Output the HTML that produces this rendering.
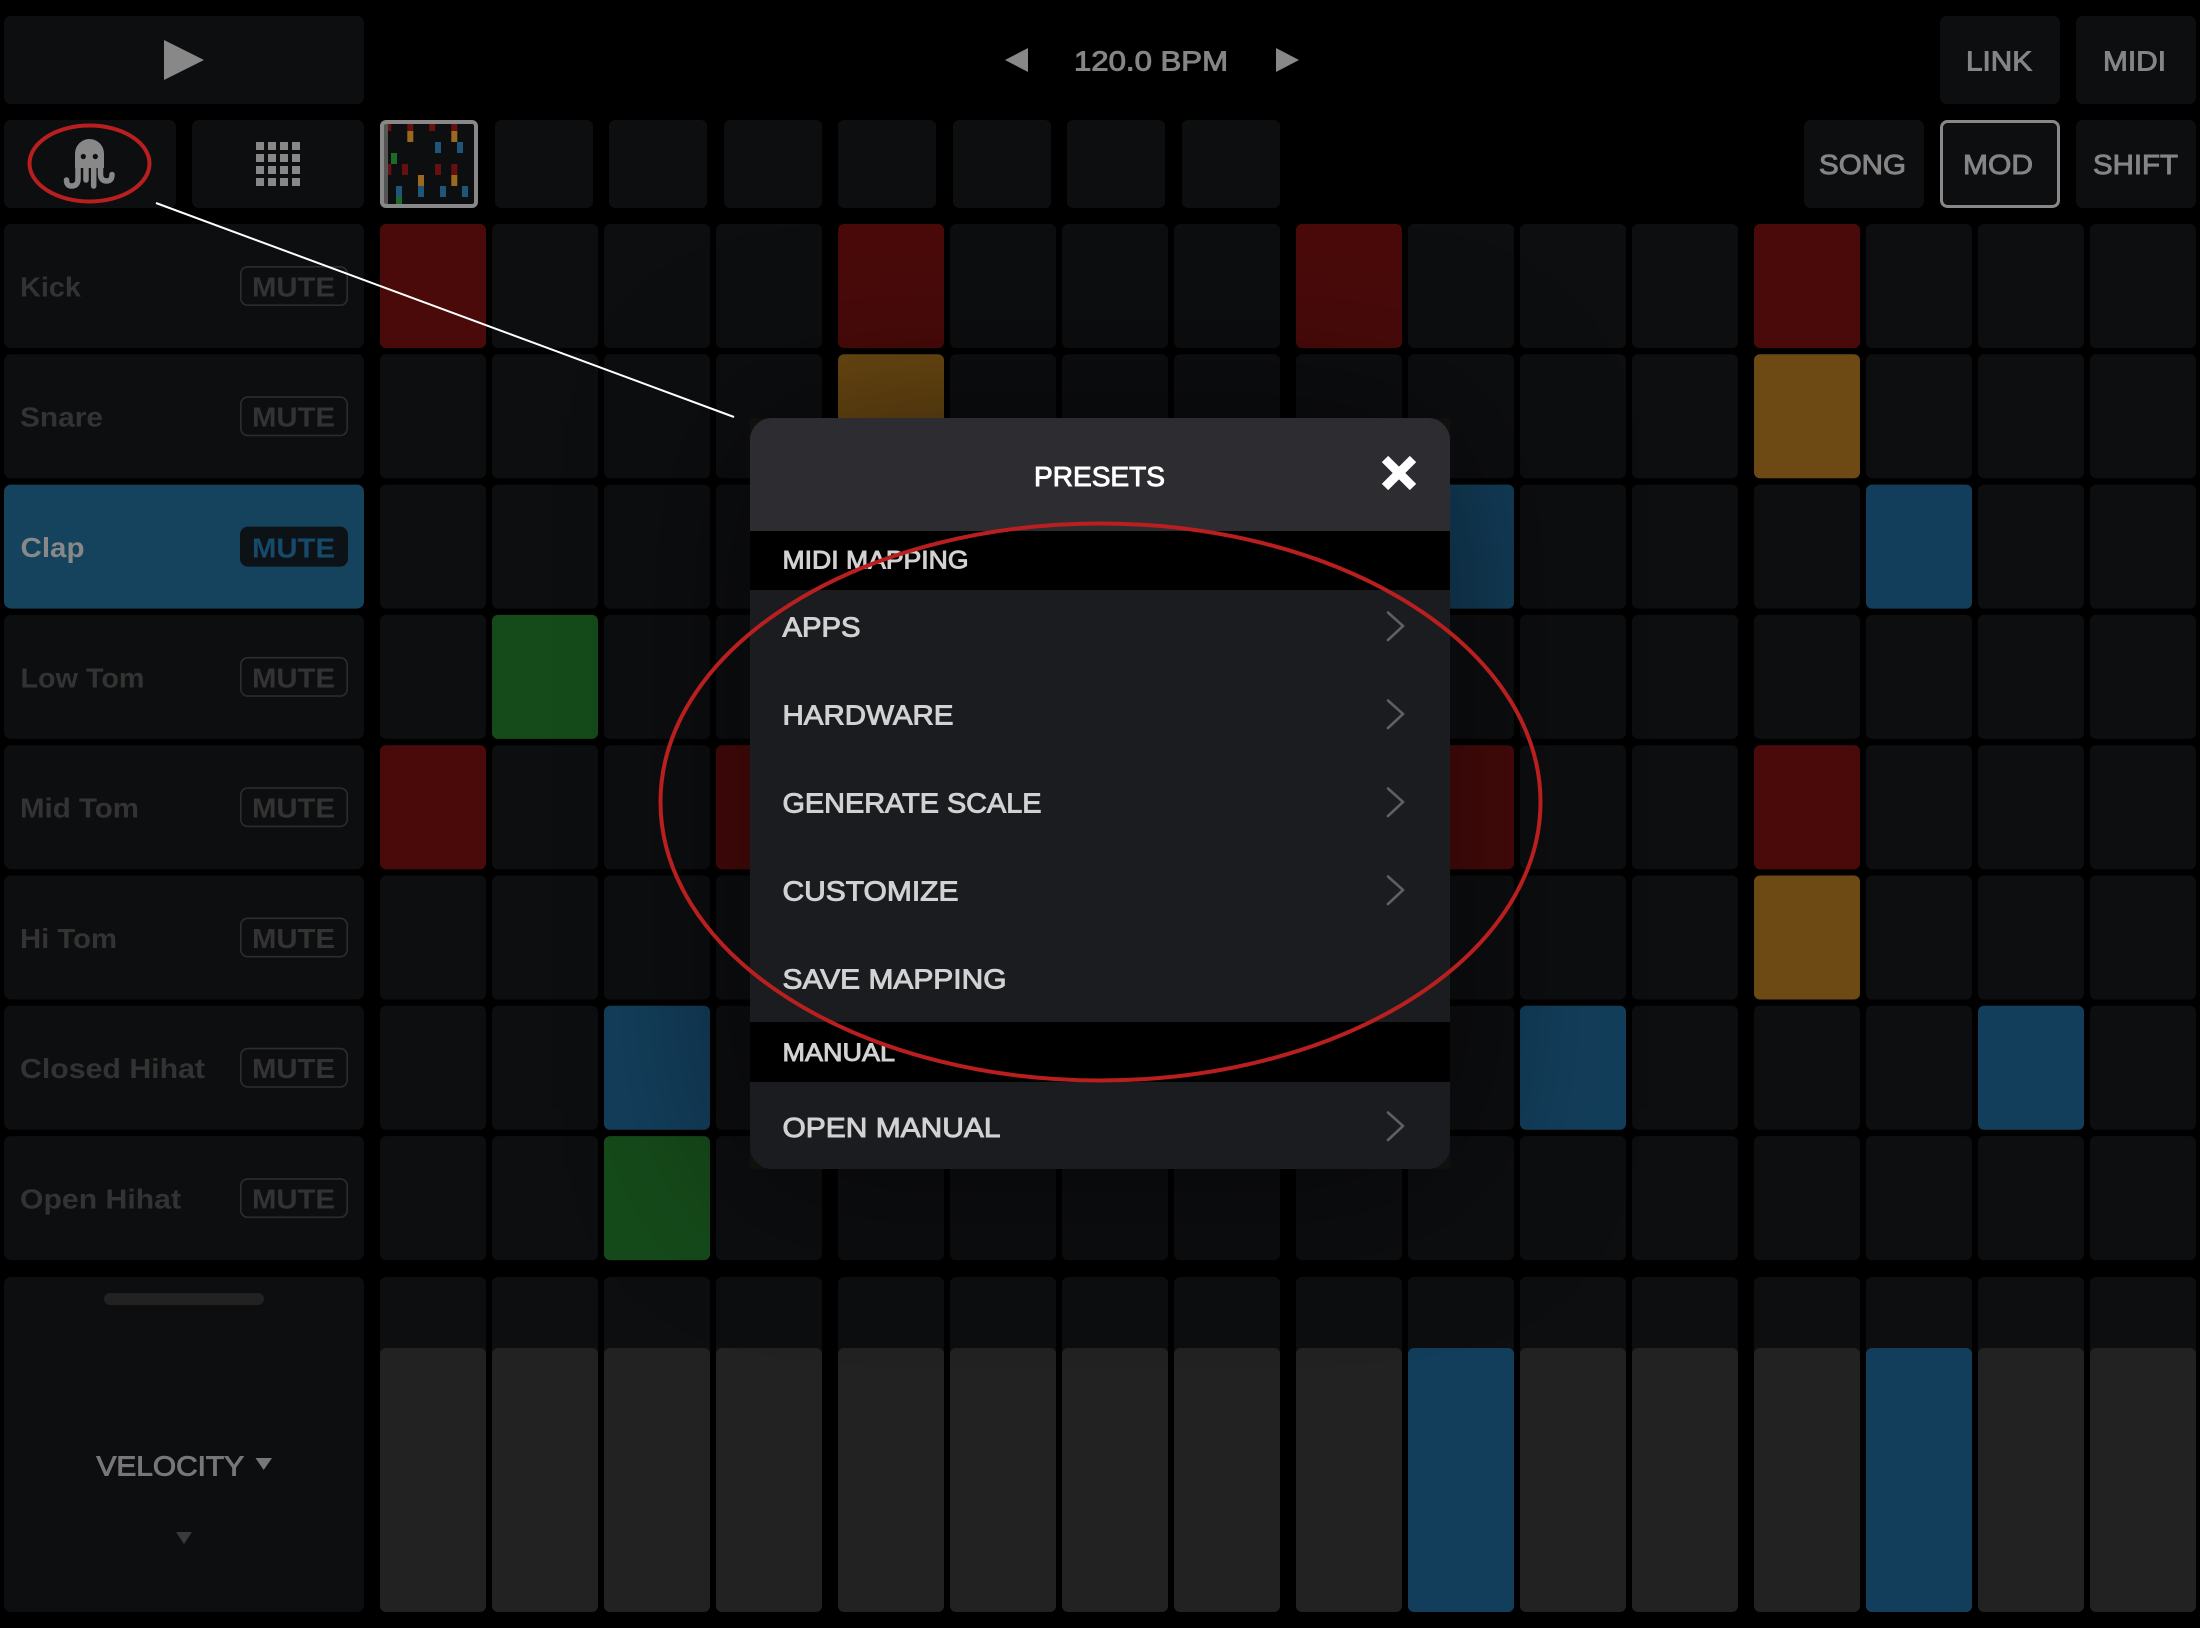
<!DOCTYPE html>
<html><head><meta charset="utf-8"><style>
html,body{margin:0;padding:0;background:#000;width:2200px;height:1628px;overflow:hidden}
svg{display:block}
text{font-family:"Liberation Sans",sans-serif;font-size:28px;fill:currentColor;stroke:currentColor;stroke-width:.95}
.b{font-weight:bold;stroke-width:0}
.p{fill:#0d0e10}
.r{fill:#4a0a0a}.o{fill:#6d4a13}.u{fill:#133e5b}.g{fill:#154a1a}
.c{color:#858585}.d{color:#333}.w{color:#d2d2d2}
.m{fill:none;stroke:#2d2d2e;stroke-width:1.6}
.th rect{shape-rendering:crispEdges}
</style></head><body>
<svg width="2200" height="1628" viewBox="0 0 2200 1628" xmlns="http://www.w3.org/2000/svg">
<defs>
<g id="row">
<rect class="p" x="380" width="106" height="124" rx="6"/><rect class="p" x="492" width="106" height="124" rx="6"/><rect class="p" x="604" width="106" height="124" rx="6"/><rect class="p" x="716" width="106" height="124" rx="6"/>
<rect class="p" x="838" width="106" height="124" rx="6"/><rect class="p" x="950" width="106" height="124" rx="6"/><rect class="p" x="1062" width="106" height="124" rx="6"/><rect class="p" x="1174" width="106" height="124" rx="6"/>
<rect class="p" x="1296" width="106" height="124" rx="6"/><rect class="p" x="1408" width="106" height="124" rx="6"/><rect class="p" x="1520" width="106" height="124" rx="6"/><rect class="p" x="1632" width="106" height="124" rx="6"/>
<rect class="p" x="1754" width="106" height="124" rx="6"/><rect class="p" x="1866" width="106" height="124" rx="6"/><rect class="p" x="1978" width="106" height="124" rx="6"/><rect class="p" x="2090" width="106" height="124" rx="6"/>
</g>
<filter id="bl" x="-40%" y="-40%" width="180%" height="180%"><feGaussianBlur stdDeviation="90"/></filter>
</defs>
<rect width="2200" height="1628" fill="#000"/>

<!-- top row -->
<rect class="p" x="4" y="16" width="360" height="88" rx="7"/>
<polygon points="164,40 204,60 164,80" fill="#888"/>
<polygon points="1028,48 1028,72 1005,60" fill="#888"/>
<polygon points="1276,48 1276,72 1299,60" fill="#888"/>
<text class="c" x="1074" y="70.5" textLength="154" lengthAdjust="spacingAndGlyphs">120.0 BPM</text>
<rect class="p" x="1940" y="16" width="120" height="88" rx="7"/>
<rect class="p" x="2076" y="16" width="120" height="88" rx="7"/>
<text class="c" x="1966" y="70.5" textLength="66" lengthAdjust="spacingAndGlyphs">LINK</text>
<text class="c" x="2103" y="70.5" textLength="63" lengthAdjust="spacingAndGlyphs">MIDI</text>

<!-- second row -->
<rect class="p" x="4" y="120" width="172" height="88" rx="7"/>
<rect class="p" x="192" y="120" width="172" height="88" rx="7"/>
<g fill="#888"><path d="M75 168V153.500a14.500 14.500 0 0 1 29 0V168z"/></g>
<circle cx="83.300" cy="156.500" r="2.600" fill="#0d0e10"/><circle cx="95.300" cy="156.500" r="2.600" fill="#0d0e10"/>
<g fill="none" stroke="#888" stroke-width="5.500" stroke-linecap="round">
<path d="M78 165V179q0 7-6.500 7q-5 0-5-6"/>
<path d="M86 165V180"/>
<path d="M93.700 165V186"/>
<path d="M100.500 165V174q0 7 6.500 7q5 0 5-6.500"/>
</g>
<g fill="#888" class="th">
<rect x="256" y="142" width="8" height="8"/><rect x="268" y="142" width="8" height="8"/><rect x="280" y="142" width="8" height="8"/><rect x="292" y="142" width="8" height="8"/>
<rect x="256" y="154" width="8" height="8"/><rect x="268" y="154" width="8" height="8"/><rect x="280" y="154" width="8" height="8"/><rect x="292" y="154" width="8" height="8"/>
<rect x="256" y="166" width="8" height="8"/><rect x="268" y="166" width="8" height="8"/><rect x="280" y="166" width="8" height="8"/><rect x="292" y="166" width="8" height="8"/>
<rect x="256" y="178" width="8" height="8"/><rect x="268" y="178" width="8" height="8"/><rect x="280" y="178" width="8" height="8"/><rect x="292" y="178" width="8" height="8"/>
</g>
<!-- thumbnail -->
<rect class="p" x="380" y="120" width="98" height="88" rx="6"/>
<rect x="384" y="124" width="4" height="80" fill="#555"/>
<g>
<rect x="388" y="124" width="3.300" height="7" fill="#661010"/><rect x="407.300" y="124" width="6" height="7" fill="#661010"/><rect x="429.300" y="124" width="6" height="7" fill="#661010"/><rect x="451.300" y="124" width="6" height="7" fill="#661010"/>
<rect x="407.300" y="131" width="6" height="11" fill="#9a681f"/><rect x="451.300" y="131" width="6" height="11" fill="#9a681f"/>
<rect x="435" y="142" width="6" height="11" fill="#1d5679"/><rect x="457" y="142" width="6" height="11" fill="#1d5679"/>
<rect x="391" y="153" width="6" height="11" fill="#1f6a28"/>
<rect x="388" y="164" width="3.300" height="11" fill="#661010"/><rect x="402" y="164" width="6" height="11" fill="#661010"/><rect x="435" y="164" width="6" height="11" fill="#661010"/><rect x="451.300" y="164" width="6" height="11" fill="#661010"/>
<rect x="418" y="175" width="6" height="11" fill="#9a681f"/><rect x="451.300" y="175" width="6" height="11" fill="#9a681f"/>
<rect x="396" y="186" width="6" height="11" fill="#1d5679"/><rect x="418" y="186" width="6" height="11" fill="#1d5679"/><rect x="440" y="186" width="6" height="11" fill="#1d5679"/><rect x="462" y="186" width="6" height="11" fill="#1d5679"/>
<rect x="396" y="197" width="6" height="7" fill="#1f6a28"/>
</g>
<rect x="382" y="122" width="94" height="84" rx="4" fill="none" stroke="#888" stroke-width="4"/>
<!-- thumbs -->
<rect class="p" x="495" y="120" width="98" height="88" rx="6"/><rect class="p" x="609" y="120" width="98" height="88" rx="6"/><rect class="p" x="724" y="120" width="98" height="88" rx="6"/><rect class="p" x="838" y="120" width="98" height="88" rx="6"/><rect class="p" x="953" y="120" width="98" height="88" rx="6"/><rect class="p" x="1067" y="120" width="98" height="88" rx="6"/><rect class="p" x="1182" y="120" width="98" height="88" rx="6"/>

<rect class="p" x="1804" y="120" width="120" height="88" rx="7"/>
<rect class="p" x="1941.500" y="121.500" width="117" height="85" rx="6" stroke="#888" stroke-width="3"/>
<rect class="p" x="2076" y="120" width="120" height="88" rx="7"/>
<text class="c" x="1819" y="174" textLength="87" lengthAdjust="spacingAndGlyphs">SONG</text>
<text class="c" x="1963" y="174" textLength="70" lengthAdjust="spacingAndGlyphs">MOD</text>
<text class="c" x="2093" y="174" textLength="85" lengthAdjust="spacingAndGlyphs">SHIFT</text>

<!-- grid -->
<use href="#row" y="224"/><use href="#row" y="354.300"/><use href="#row" y="484.600"/><use href="#row" y="614.900"/><use href="#row" y="745.200"/><use href="#row" y="875.500"/><use href="#row" y="1005.800"/><use href="#row" y="1136.100"/>
<!-- kick -->
<rect class="r" x="380" y="224" width="106" height="124" rx="6"/><rect class="r" x="838" y="224" width="106" height="124" rx="6"/><rect class="r" x="1296" y="224" width="106" height="124" rx="6"/><rect class="r" x="1754" y="224" width="106" height="124" rx="6"/>
<!-- snare -->
<rect class="o" x="838" y="354.300" width="106" height="124" rx="6"/><rect class="o" x="1754" y="354.300" width="106" height="124" rx="6"/>
<!-- clap -->
<rect class="u" x="1408" y="484.600" width="106" height="124" rx="6"/><rect class="u" x="1866" y="484.600" width="106" height="124" rx="6"/>
<!-- low tom -->
<rect class="g" x="492" y="614.900" width="106" height="124" rx="6"/>
<!-- mid tom -->
<rect class="r" x="380" y="745.200" width="106" height="124" rx="6"/><rect class="r" x="716" y="745.200" width="106" height="124" rx="6"/><rect class="r" x="1408" y="745.200" width="106" height="124" rx="6"/><rect class="r" x="1754" y="745.200" width="106" height="124" rx="6"/>
<!-- hi tom -->
<rect class="o" x="1754" y="875.500" width="106" height="124" rx="6"/>
<!-- closed -->
<rect class="u" x="604" y="1005.800" width="106" height="124" rx="6"/><rect class="u" x="1520" y="1005.800" width="106" height="124" rx="6"/><rect class="u" x="1978" y="1005.800" width="106" height="124" rx="6"/>
<!-- open -->
<rect class="g" x="604" y="1136.100" width="106" height="124" rx="6"/>

<!-- tracks -->
<rect class="p" x="4" y="224" width="360" height="124" rx="7"/>
<rect class="p" x="4" y="354.300" width="360" height="124" rx="7"/>
<rect x="4" y="484.600" width="360" height="124" rx="7" fill="#15425d"/>
<rect class="p" x="4" y="614.900" width="360" height="124" rx="7"/>
<rect class="p" x="4" y="745.200" width="360" height="124" rx="7"/>
<rect class="p" x="4" y="875.500" width="360" height="124" rx="7"/>
<rect class="p" x="4" y="1005.800" width="360" height="124" rx="7"/>
<rect class="p" x="4" y="1136.100" width="360" height="124" rx="7"/>
<g class="b">
<text class="b d" x="20" y="296.400" textLength="61" lengthAdjust="spacingAndGlyphs">Kick</text>
<text class="b d" x="20" y="426.700" textLength="83" lengthAdjust="spacingAndGlyphs">Snare</text>
<text class="b" style="color:#888" x="20.500" y="557" textLength="64" lengthAdjust="spacingAndGlyphs">Clap</text>
<text class="b d" x="20.500" y="687.300" textLength="124" lengthAdjust="spacingAndGlyphs">Low Tom</text>
<text class="b d" x="20" y="817.600" textLength="119" lengthAdjust="spacingAndGlyphs">Mid Tom</text>
<text class="b d" x="20" y="947.900" textLength="97" lengthAdjust="spacingAndGlyphs">Hi Tom</text>
<text class="b d" x="20" y="1078.200" textLength="185" lengthAdjust="spacingAndGlyphs">Closed Hihat</text>
<text class="b d" x="20" y="1208.500" textLength="161" lengthAdjust="spacingAndGlyphs">Open Hihat</text>
</g>
<rect class="m" x="240.800" y="266.800" width="106.400" height="38.400" rx="7"/>
<rect class="m" x="240.800" y="397.100" width="106.400" height="38.400" rx="7"/>
<rect x="240" y="526.600" width="108" height="40" rx="8" fill="#0d1216"/>
<rect class="m" x="240.800" y="657.700" width="106.400" height="38.400" rx="7"/>
<rect class="m" x="240.800" y="788" width="106.400" height="38.400" rx="7"/>
<rect class="m" x="240.800" y="918.300" width="106.400" height="38.400" rx="7"/>
<rect class="m" x="240.800" y="1048.600" width="106.400" height="38.400" rx="7"/>
<rect class="m" x="240.800" y="1178.900" width="106.400" height="38.400" rx="7"/>
<text class="b d" x="252" y="296.400" textLength="83" lengthAdjust="spacingAndGlyphs">MUTE</text>
<text class="b d" x="252" y="426.700" textLength="83" lengthAdjust="spacingAndGlyphs">MUTE</text>
<text class="b" style="color:#164a6c" x="252" y="557.500" textLength="83" lengthAdjust="spacingAndGlyphs">MUTE</text>
<text class="b d" x="252" y="687.300" textLength="83" lengthAdjust="spacingAndGlyphs">MUTE</text>
<text class="b d" x="252" y="817.600" textLength="83" lengthAdjust="spacingAndGlyphs">MUTE</text>
<text class="b d" x="252" y="947.900" textLength="83" lengthAdjust="spacingAndGlyphs">MUTE</text>
<text class="b d" x="252" y="1078.200" textLength="83" lengthAdjust="spacingAndGlyphs">MUTE</text>
<text class="b d" x="252" y="1208.500" textLength="83" lengthAdjust="spacingAndGlyphs">MUTE</text>

<!-- bottom -->
<rect class="p" x="4" y="1277" width="360" height="335" rx="7"/>
<rect x="104" y="1293" width="160" height="12" rx="6" fill="#222"/>
<text x="96.500" y="1475.500" style="color:#777" textLength="147.500" lengthAdjust="spacingAndGlyphs">VELOCITY</text>
<polygon points="255.500,1458 272,1458 263.700,1470" fill="#777"/>
<polygon points="176,1532 192,1532 184,1544" fill="#3a3a3a"/>
<g><rect class="p" x="380" y="1277" width="106" height="335" rx="6"/><rect x="380" y="1348" width="106" height="264" rx="6" fill="#222"/></g>
<g><rect class="p" x="492" y="1277" width="106" height="335" rx="6"/><rect x="492" y="1348" width="106" height="264" rx="6" fill="#222"/></g>
<g><rect class="p" x="604" y="1277" width="106" height="335" rx="6"/><rect x="604" y="1348" width="106" height="264" rx="6" fill="#222"/></g>
<g><rect class="p" x="716" y="1277" width="106" height="335" rx="6"/><rect x="716" y="1348" width="106" height="264" rx="6" fill="#222"/></g>
<g><rect class="p" x="838" y="1277" width="106" height="335" rx="6"/><rect x="838" y="1348" width="106" height="264" rx="6" fill="#222"/></g>
<g><rect class="p" x="950" y="1277" width="106" height="335" rx="6"/><rect x="950" y="1348" width="106" height="264" rx="6" fill="#222"/></g>
<g><rect class="p" x="1062" y="1277" width="106" height="335" rx="6"/><rect x="1062" y="1348" width="106" height="264" rx="6" fill="#222"/></g>
<g><rect class="p" x="1174" y="1277" width="106" height="335" rx="6"/><rect x="1174" y="1348" width="106" height="264" rx="6" fill="#222"/></g>
<g><rect class="p" x="1296" y="1277" width="106" height="335" rx="6"/><rect x="1296" y="1348" width="106" height="264" rx="6" fill="#222"/></g>
<g><rect class="p" x="1408" y="1277" width="106" height="335" rx="6"/><rect x="1408" y="1348" width="106" height="264" rx="6" fill="#133e5b"/></g>
<g><rect class="p" x="1520" y="1277" width="106" height="335" rx="6"/><rect x="1520" y="1348" width="106" height="264" rx="6" fill="#222"/></g>
<g><rect class="p" x="1632" y="1277" width="106" height="335" rx="6"/><rect x="1632" y="1348" width="106" height="264" rx="6" fill="#222"/></g>
<g><rect class="p" x="1754" y="1277" width="106" height="335" rx="6"/><rect x="1754" y="1348" width="106" height="264" rx="6" fill="#222"/></g>
<g><rect class="p" x="1866" y="1277" width="106" height="335" rx="6"/><rect x="1866" y="1348" width="106" height="264" rx="6" fill="#133e5b"/></g>
<g><rect class="p" x="1978" y="1277" width="106" height="335" rx="6"/><rect x="1978" y="1348" width="106" height="264" rx="6" fill="#222"/></g>
<g><rect class="p" x="2090" y="1277" width="106" height="335" rx="6"/><rect x="2090" y="1348" width="106" height="264" rx="6" fill="#222"/></g>

<!-- modal shadow -->
<rect x="750" y="418" width="700" height="751" fill="#0a1000" opacity=".55" filter="url(#bl)"/>

<!-- annotation line -->
<line x1="156" y1="203" x2="734" y2="417" stroke="#fff" stroke-width="2"/>

<!-- modal -->
<rect x="750" y="418" width="700" height="751" rx="22" fill="#1b1c20"/>
<path d="M750 531V440a22 22 0 0 1 22-22H1428a22 22 0 0 1 22 22V531z" fill="#2c2c31"/>
<rect x="750" y="531" width="700" height="59" fill="#000"/>
<rect x="750" y="1022" width="700" height="60" fill="#000"/>
<text x="1034" y="486" style="color:#fff" textLength="131" lengthAdjust="spacingAndGlyphs">PRESETS</text>
<path d="M1385 459L1413 487M1413 459L1385 487" stroke="#fff" stroke-width="9" fill="none"/>
<text class="w" x="782.500" y="568.500" style="font-size:25px" textLength="186" lengthAdjust="spacingAndGlyphs">MIDI MAPPING</text>
<text class="w" x="782.500" y="636.500" textLength="78" lengthAdjust="spacingAndGlyphs">APPS</text>
<text class="w" x="782.500" y="724.500" textLength="171" lengthAdjust="spacingAndGlyphs">HARDWARE</text>
<text class="w" x="782.500" y="812.500" textLength="259" lengthAdjust="spacingAndGlyphs">GENERATE SCALE</text>
<text class="w" x="782.500" y="900.500" textLength="176" lengthAdjust="spacingAndGlyphs">CUSTOMIZE</text>
<text class="w" x="782.500" y="988.500" textLength="224" lengthAdjust="spacingAndGlyphs">SAVE MAPPING</text>
<text class="w" x="782.500" y="1061" style="font-size:25px" textLength="112.500" lengthAdjust="spacingAndGlyphs">MANUAL</text>
<text class="w" x="782.500" y="1137" textLength="218" lengthAdjust="spacingAndGlyphs">OPEN MANUAL</text>
<g fill="none" stroke="#606064" stroke-width="2.600" stroke-linecap="round" stroke-linejoin="round">
<path d="M1388 612.500L1403 626L1388 640"/>
<path d="M1388 700.500L1403 714L1388 728"/>
<path d="M1388 788.500L1403 802L1388 816"/>
<path d="M1388 876.500L1403 890L1388 904"/>
<path d="M1388 1112.500L1403 1126L1388 1140"/>
</g>

<!-- red annotations -->
<ellipse cx="89.500" cy="163.500" rx="60" ry="38" fill="none" stroke="#b91f1f" stroke-width="4"/>
<ellipse cx="1100.500" cy="802" rx="440" ry="278.500" fill="none" stroke="#b91f1f" stroke-width="4"/>
</svg>
</body></html>
